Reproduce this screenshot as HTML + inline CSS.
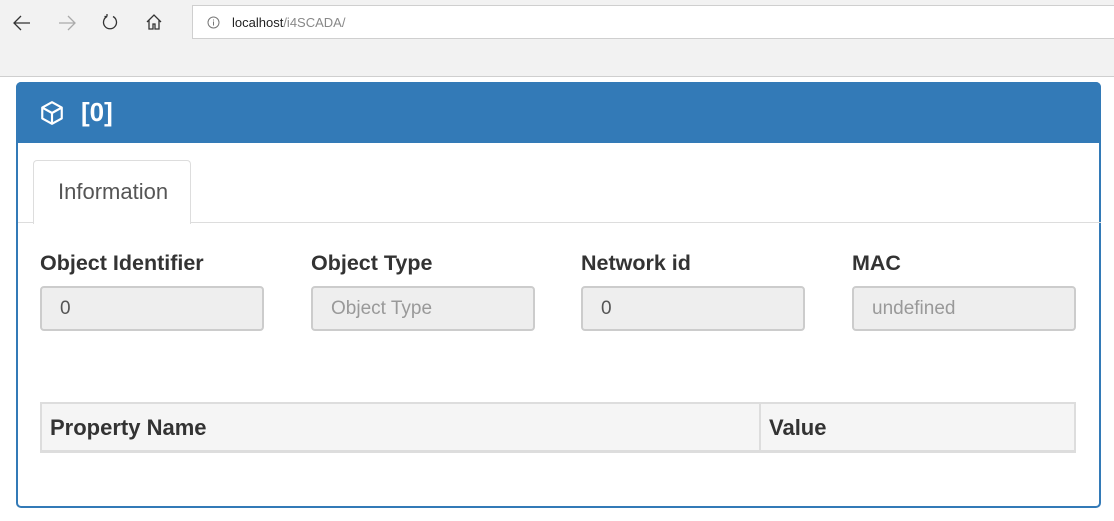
<!DOCTYPE html>
<html><head><meta charset="utf-8"><style>
*{box-sizing:border-box;margin:0;padding:0}
body{width:1114px;height:521px;background:#fff;font-family:"Liberation Sans",Arial,sans-serif;position:relative;overflow:hidden;color:#333}
.chrome{position:absolute;left:0;top:0;width:1114px;height:77px;background:#f2f2f2;border-bottom:1px solid #cfcfcf}
.addr{position:absolute;left:192px;top:5px;width:930px;height:34px;background:#fff;border:1px solid #cfcfcf}
.addr span{position:absolute;top:9px;font-size:13px}
.panel{position:absolute;left:16px;top:82px;width:1085px;height:426px;border:2px solid #337ab7;border-radius:5px}
.head{position:absolute;left:-2px;top:-2px;width:1085px;height:61px;background:#337ab7;border-radius:5px 5px 0 0}
.head b{position:absolute;left:65px;top:15px;color:#fff;font-size:26px}
.tabline{position:absolute;left:0;top:138px;width:1083px;height:1px;background:#ddd}
.tab{position:absolute;left:15px;top:76px;width:158px;height:64px;border:1px solid #ddd;border-bottom:none;border-radius:4px 4px 0 0;background:#fff;font-size:22px;color:#555;padding:18px 0 0 24px}
.lbl{position:absolute;top:167px;font-size:21.5px;font-weight:bold;color:#333}
.inp{position:absolute;top:202px;width:224px;height:45px;background:#eee;border:2px solid #ccc;border-radius:4px;font-size:19px;padding:10px 0 0 18px;color:#555}
.tbl{position:absolute;left:22px;top:318px;width:1036px;height:51px;background:#f5f5f5;border:2px solid #ddd;border-bottom-width:3px}
.tbl span{position:absolute;top:11px;font-size:22px;font-weight:bold;color:#333}
</style></head><body>
<div class="chrome">
<svg style="position:absolute;left:12px;top:14px" width="20" height="18" viewBox="0 0 20 18"><path d="M18 9H2M9 2L2 9l7 7" stroke="#333" stroke-width="1.3" fill="none"/></svg>
<svg style="position:absolute;left:57px;top:14px" width="20" height="18" viewBox="0 0 20 18"><path d="M2 9h16M11 2l7 7-7 7" stroke="#aaa" stroke-width="1.3" fill="none"/></svg>
<svg style="position:absolute;left:101px;top:13px" width="18" height="18" viewBox="0 0 18 18"><path d="M6 3.5A6.5 6.5 0 1 0 12 3.5M6 3.5V1M6 3.5H3.5" stroke="#333" stroke-width="1.3" fill="none"/></svg>
<svg style="position:absolute;left:145px;top:13px" width="18" height="18" viewBox="0 0 18 18"><path d="M2 9L9 2l7 7M4 7v9h4v-5h2v5h4V7" stroke="#333" stroke-width="1.3" fill="none"/></svg>
<div class="addr"><svg style="position:absolute;left:14px;top:10px" width="13" height="13" viewBox="0 0 13 13"><circle cx="6.5" cy="6.5" r="5.5" stroke="#777" fill="none"/><path d="M6.5 5.5v4M6.5 3.5v1" stroke="#777"/></svg><span style="left:39px;color:#222">localhost<span style="position:static;color:#888">/i4SCADA/</span></span></div>
</div>
<div class="panel">
<div class="head"><svg style="position:absolute;left:23px;top:18px" width="26" height="26" viewBox="0 0 24 24"><path d="M12 2l9 5v10l-9 5-9-5V7zM3 7l9 5 9-5M12 12v10" stroke="#fff" stroke-width="2" fill="none" stroke-linejoin="round"/></svg><b>[0]</b></div>
<div class="tabline"></div>
<div class="tab">Information</div>
<div class="lbl" style="left:22px">Object Identifier</div>
<div class="lbl" style="left:293px">Object Type</div>
<div class="lbl" style="left:563px">Network id</div>
<div class="lbl" style="left:834px">MAC</div>
<div class="inp" style="left:22px">0</div>
<div class="inp" style="left:293px;color:#999">Object Type</div>
<div class="inp" style="left:563px">0</div>
<div class="inp" style="left:834px;color:#999">undefined</div>
<div class="tbl"><span style="left:8px">Property Name</span><div style="position:absolute;left:717px;top:0;width:2px;height:46px;background:#ddd"></div><span style="left:727px">Value</span></div>
</div>
</body></html>
